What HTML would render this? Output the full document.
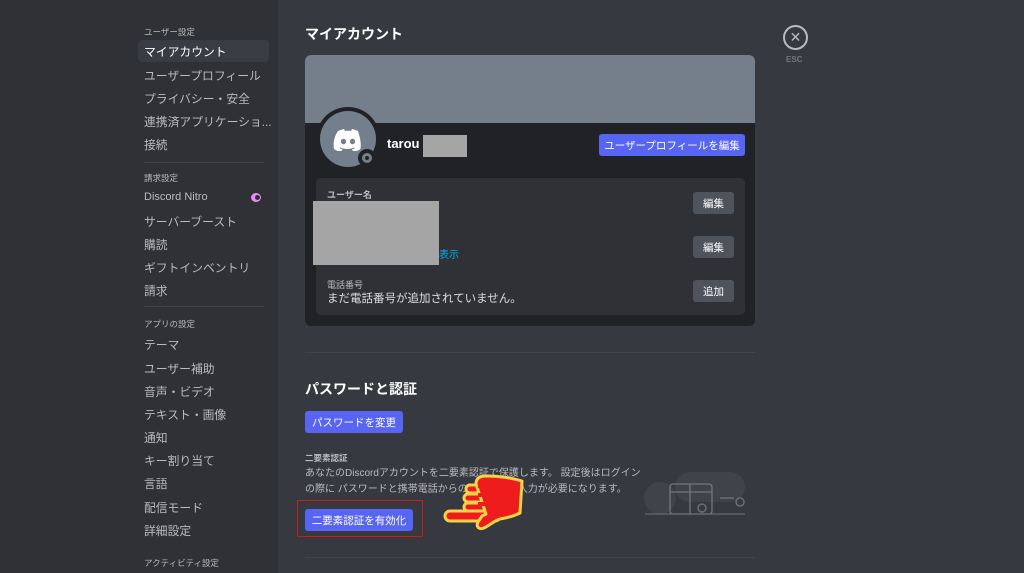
<!DOCTYPE html>
<html><head><meta charset="utf-8"><style>
*{margin:0;padding:0;box-sizing:border-box}
body{width:1024px;height:573px;overflow:hidden;background:#36393f;font-family:"Liberation Sans","Noto Sans CJK JP",sans-serif;position:relative;color:#dcddde}
.side{position:absolute;left:0;top:0;width:278px;height:573px;background:#2f3136}
.a{position:absolute;white-space:nowrap}
.h{font-size:8.5px;color:#b9bbbe;left:144px}
.i{font-size:11.8px;color:#b9bbbe;left:144px}
.btn{position:absolute;background:#5865f2;color:#fff;font-size:10.5px;border-radius:3px;display:flex;align-items:center;justify-content:center}
.gb{position:absolute;background:#4f545c;color:#fff;font-size:10.5px;border-radius:3px;display:flex;align-items:center;justify-content:center;width:41px;height:22px;left:693px}
.gray{position:absolute;background:#a5a5a5}
</style></head><body>
<div class="side"></div>
<div class="a" style="left:138px;top:40px;width:131px;height:22px;background:#393c43;border-radius:4px"></div>
<div class="a h" style="top:26px">ユーザー設定</div>
<div class="a i" style="top:43px;color:#fff">マイアカウント</div>
<div class="a i" style="top:67px">ユーザープロフィール</div>
<div class="a i" style="top:90px">プライバシー・安全</div>
<div class="a i" style="top:113px">連携済アプリケーショ...</div>
<div class="a i" style="top:136px">接続</div>
<div class="a" style="left:144px;top:162px;width:120px;height:1px;background:#3f4147"></div>
<div class="a h" style="top:172px">請求設定</div>
<div class="a i" style="top:191px;font-size:11px">Discord Nitro</div>
<div class="a" style="left:251px;top:193px;width:10px;height:9px;border-radius:50%;background:#e78ef5"></div>
<div class="a" style="left:255px;top:195px;width:5px;height:5px;border-radius:50%;background:#2f3136"></div>
<div class="a i" style="top:213px">サーバーブースト</div>
<div class="a i" style="top:236px">購読</div>
<div class="a i" style="top:259px">ギフトインベントリ</div>
<div class="a i" style="top:282px">請求</div>
<div class="a" style="left:144px;top:306px;width:120px;height:1px;background:#3f4147"></div>
<div class="a h" style="top:318px">アプリの設定</div>
<div class="a i" style="top:336px">テーマ</div>
<div class="a i" style="top:360px">ユーザー補助</div>
<div class="a i" style="top:383px">音声・ビデオ</div>
<div class="a i" style="top:406px">テキスト・画像</div>
<div class="a i" style="top:429px">通知</div>
<div class="a i" style="top:452px">キー割り当て</div>
<div class="a i" style="top:475px">言語</div>
<div class="a i" style="top:499px">配信モード</div>
<div class="a i" style="top:522px">詳細設定</div>
<div class="a h" style="top:557px">アクティビティ設定</div>

<div class="a" style="left:305px;top:24px;font-size:14px;font-weight:bold;color:#fff">マイアカウント</div>
<div class="a" style="left:783px;top:25px;width:25px;height:25px;border:2px solid #b9bbbe;border-radius:50%;color:#b9bbbe;font-size:14px;text-align:center;line-height:20px">✕</div>
<div class="a" style="left:786px;top:55px;font-size:8px;color:#72767d;font-weight:bold">ESC</div>

<div class="a" style="left:305px;top:55px;width:450px;height:271px;background:#202225;border-radius:6px;overflow:hidden"><div style="height:68px;background:#757e8b"></div></div>
<div class="a" style="left:316px;top:107px;width:64px;height:64px;border-radius:50%;background:#202225"></div>
<div class="a" style="left:320px;top:111px;width:56px;height:56px;border-radius:50%;background:#747f8d"></div>
<svg class="a" style="left:333px;top:129px" width="30" height="22" viewBox="0 0 30 22"><path d="M25 2C23 1 21 .5 19 0l-1 2c-2-.3-4-.3-6 0L11 0C9 .5 7 1 5 2 1 8 0 14 1 20c2 1.5 5 2.5 7 3l1.5-2.5c-1-.4-2-1-3-1.5l.7-.5c4 2 10 2 14 0l.7.5c-1 .6-2 1.1-3 1.5L20.5 23c2.5-.5 5-1.5 7-3 1-7-1-13-2.5-18z" fill="#fff"/><ellipse cx="10.5" cy="12.5" rx="2.6" ry="2.8" fill="#747f8d"/><ellipse cx="19.5" cy="12.5" rx="2.6" ry="2.8" fill="#747f8d"/></svg>
<div class="a" style="left:358px;top:149px;width:18px;height:18px;border-radius:50%;background:#202225"></div>
<div class="a" style="left:362px;top:153px;width:10px;height:10px;border-radius:50%;border:3px solid #747f8d"></div>
<div class="a" style="left:387px;top:136px;font-size:13px;font-weight:bold;color:#fff">tarou</div>
<div class="gray" style="left:423px;top:135px;width:44px;height:22px"></div>
<div class="btn" style="left:599px;top:134px;width:146px;height:22px">ユーザープロフィールを編集</div>

<div class="a" style="left:316px;top:178px;width:429px;height:137px;background:#2f3136;border-radius:5px"></div>
<div class="a" style="left:327px;top:188px;font-size:9px;font-weight:bold;color:#b9bbbe">ユーザー名</div>
<div class="gray" style="left:313px;top:201px;width:126px;height:64px"></div>
<div class="a" style="left:439px;top:246px;font-size:10px;color:#00aff4">表示</div>
<div class="gb" style="top:192px">編集</div>
<div class="gb" style="top:236px">編集</div>
<div class="a" style="left:327px;top:278px;font-size:9px;color:#b9bbbe">電話番号</div>
<div class="a" style="left:327px;top:290px;font-size:11.5px;color:#dcddde">まだ電話番号が追加されていません。</div>
<div class="gb" style="top:280px">追加</div>

<div class="a" style="left:305px;top:352px;width:450px;height:1px;background:#42454a"></div>
<div class="a" style="left:305px;top:379px;font-size:14px;font-weight:bold;color:#fff">パスワードと認証</div>
<div class="btn" style="left:305px;top:411px;width:98px;height:22px">パスワードを変更</div>
<div class="a" style="left:305px;top:452px;font-size:8.5px;font-weight:bold;color:#b9bbbe">二要素認証</div>
<div class="a" style="left:305px;top:466px;font-size:10px;color:#b9bbbe;line-height:16px">あなたのDiscordアカウントを二要素認証で保護します。 設定後はログイン<br>の際に パスワードと携帯電話からの認証コード入力が必要になります。</div>
<svg class="a" style="left:640px;top:470px" width="120" height="50" viewBox="0 0 120 50"><rect x="35" y="2" width="70" height="30" rx="15" fill="#3f434a"/><circle cx="20" cy="28" r="16" fill="#3f434a"/><g fill="none" stroke="#72767d" stroke-width="1.3"><rect x="30" y="14" width="42" height="30" rx="3"/><path d="M30 22h42M50 14v30M80 28h14M100 28a4 4 0 1 0 .1 0"/><circle cx="62" cy="38" r="4"/></g><path d="M5 44h100" stroke="#72767d"/></svg>
<div class="a" style="left:297px;top:500px;width:126px;height:37px;border:1.5px solid #d01818"></div>
<div class="btn" style="left:305px;top:509px;width:108px;height:22px">二要素認証を有効化</div>
<svg class="a" style="left:436px;top:470px" width="95" height="65" viewBox="0 0 95 65"><g fill="#ee1c1c" stroke="#f7d34a" stroke-width="3" stroke-linejoin="round"><rect x="30" y="15" width="34" height="8" rx="4"/><rect x="28" y="24" width="34" height="8" rx="4"/><rect x="28" y="33" width="34" height="8" rx="4"/><rect x="9" y="41" width="55" height="10" rx="5"/><path d="M40 14c0-6 4-8 10-8 12 0 26 2 36 5l-2 32c-6 3-14 5-20 6-6 2-10 6-16 9-6 2-8-2-6-6l4-6 4-2z"/></g><path d="M42 16h22M42 25h18M42 34h18" stroke="#ee1c1c" stroke-width="4"/></svg>
<div class="a" style="left:305px;top:557px;width:450px;height:1px;background:#42454a"></div>
</body></html>
